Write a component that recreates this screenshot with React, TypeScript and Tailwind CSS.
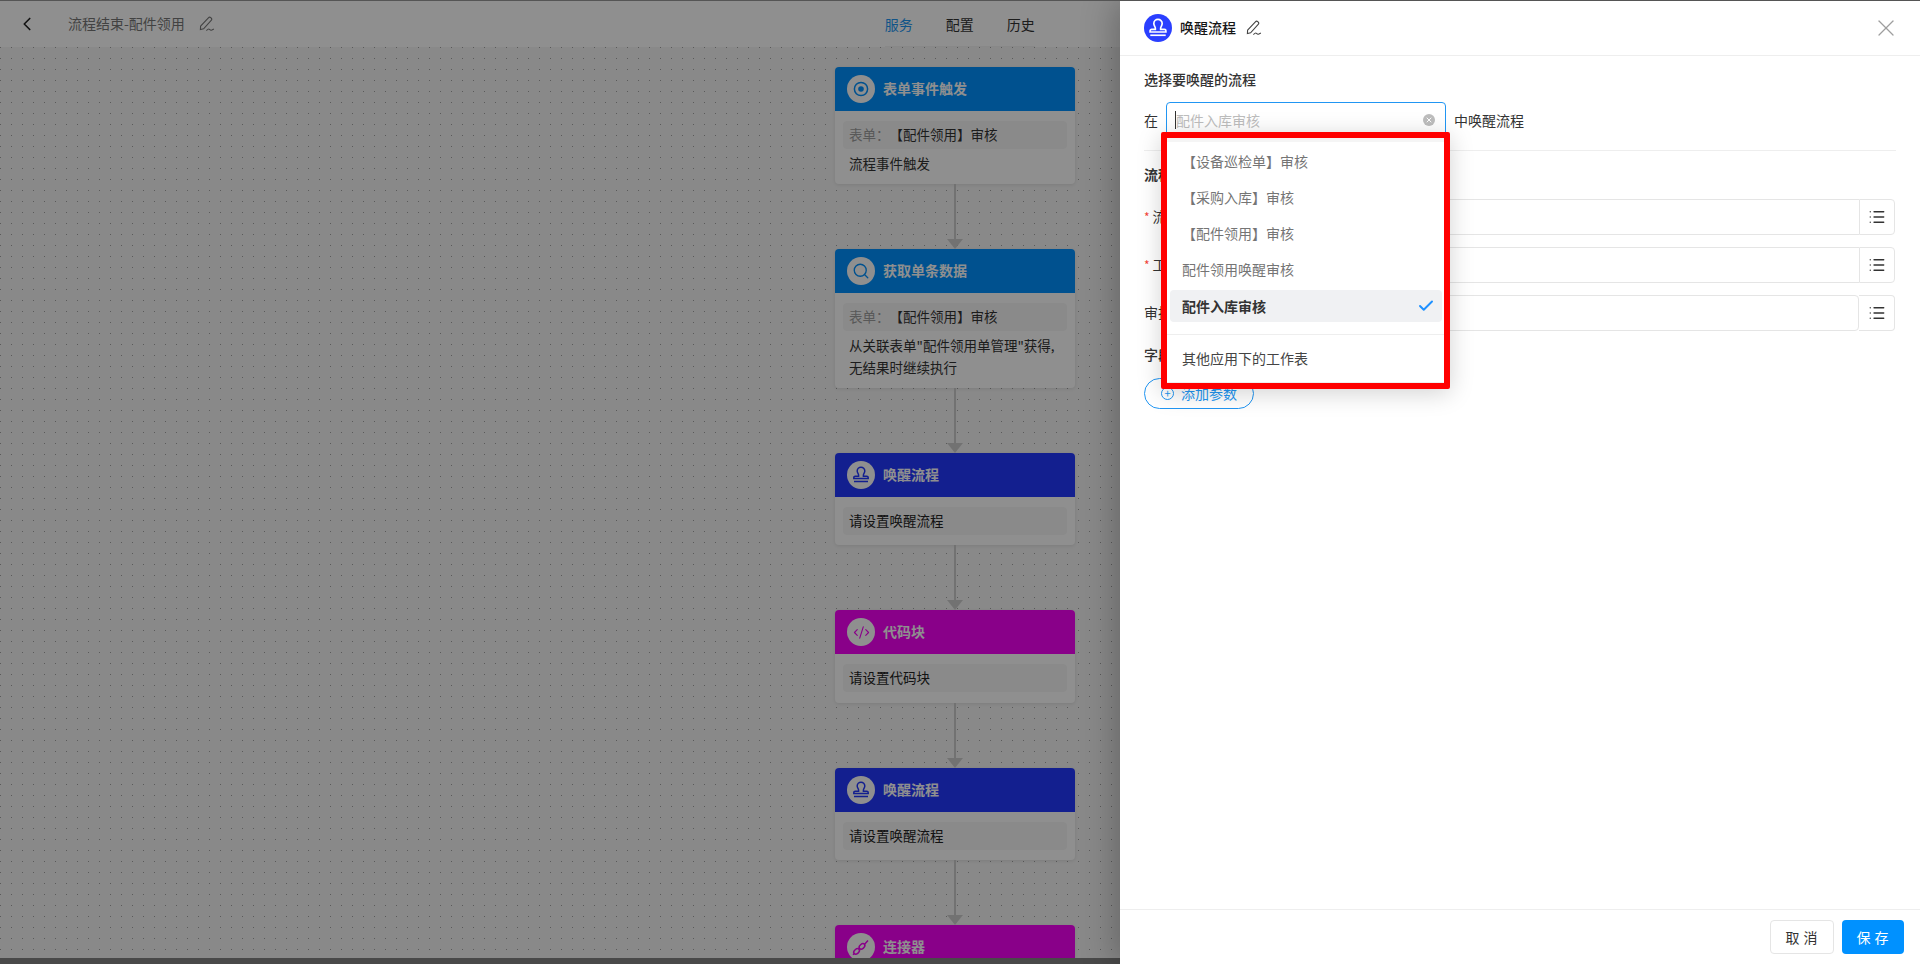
import { Check, ChevronLeft, CodeXml, List, Search, X } from "lucide-react";
import type { ReactNode } from "react";

type Node = {
  title: string;
  color: string;
  icon: ReactNode;
  form?: string;
  text?: string[];
  placeholder?: string;
  tall?: boolean;
};

function EditIcon({ className }: { className?: string }) {
  return (
    <svg viewBox="0 0 16 16" fill="none" stroke="currentColor" strokeWidth="1.1" className={className}>
      <path d="M1.6 10.2 9.4 1.8a1.7 1.7 0 0 1 2.4 -.1l.3.3a1.7 1.7 0 0 1 .1 2.4L4.6 12.8l-3.2 .8z" />
      <path d="M7.4 14.6c1.2-1.2 2.3-2 3-1.3.6.6 1 1.1 1.9.9.9-.2 1.6-.7 2.6-1.1" />
    </svg>
  );
}

function StampIcon({ className }: { className?: string }) {
  return (
    <svg viewBox="0 0 20 20" fill="none" stroke="currentColor" strokeWidth="1.5" className={className}>
      <path d="M7.6 10.2c0-1.4-1.4-2.2-1.4-4.2a3.8 3.8 0 0 1 7.6 0c0 2-1.4 2.8-1.4 4.2v1h3.4a1.4 1.4 0 0 1 1.4 1.4v1H2.8v-1a1.4 1.4 0 0 1 1.4-1.4h3.4z" />
      <path d="M3 16.6h14" />
    </svg>
  );
}

function TargetIcon({ className }: { className?: string }) {
  return (
    <svg viewBox="0 0 20 20" fill="none" stroke="currentColor" className={className}>
      <circle cx="10" cy="10" r="6.6" strokeWidth="1.5" />
      <circle cx="10" cy="10" r="2.8" fill="currentColor" stroke="none" />
    </svg>
  );
}

function LinkIcon({ className }: { className?: string }) {
  return (
    <svg viewBox="0 0 20 20" fill="none" stroke="currentColor" strokeWidth="1.5" className={className}>
      <ellipse cx="5.6" cy="14.4" rx="3.2" ry="2.2" transform="rotate(-40 5.6 14.4)" />
      <ellipse cx="11" cy="9.4" rx="3.2" ry="2.2" transform="rotate(-40 11 9.4)" />
      <path d="M7.8 12.4 8.8 11.4M13.6 7.2 17 3.6M2 17.8l1-1" />
    </svg>
  );
}

const nodes: Node[] = [
  {
    title: "表单事件触发",
    color: "bg-[#0091ff]",
    icon: <TargetIcon className="h-5 w-5 text-[#0091ff]" />,
    form: "【配件领用】审核",
    text: ["流程事件触发"],
  },
  {
    title: "获取单条数据",
    color: "bg-[#0091ff]",
    icon: <Search size={18} strokeWidth={1.8} className="text-[#0091ff]" />,
    form: "【配件领用】审核",
    text: ['从关联表单"配件领用单管理"获得,', "无结果时继续执行"],
  },
  {
    title: "唤醒流程",
    color: "bg-[#2338ff]",
    icon: <StampIcon className="h-5 w-5 text-[#2338ff]" />,
    placeholder: "请设置唤醒流程",
  },
  {
    title: "代码块",
    color: "bg-[#f400f4]",
    icon: <CodeXml size={17} strokeWidth={1.6} className="text-[#f400f4]" />,
    placeholder: "请设置代码块",
    tall: true,
  },
  {
    title: "唤醒流程",
    color: "bg-[#2338ff]",
    icon: <StampIcon className="h-5 w-5 text-[#2338ff]" />,
    placeholder: "请设置唤醒流程",
  },
  {
    title: "连接器",
    color: "bg-[#f400f4]",
    icon: <LinkIcon className="h-5 w-5 text-[#f400f4]" />,
    placeholder: "请设置连接器",
  },
];

function FlowCard({ node }: { node: Node }) {
  return (
    <div className="w-[240px] overflow-hidden rounded-[4px] bg-white shadow-[0_1px_4px_rgba(0,0,0,0.1)]">
      <div className={`flex h-[44px] items-center gap-2 pl-3 ${node.color}`}>
        <div className="flex h-7 w-7 items-center justify-center rounded-full bg-white">{node.icon}</div>
        <span className="pb-[2px] text-[14px] font-bold text-white">{node.title}</span>
      </div>
      <div className={`px-2 pt-[10px] ${node.tall ? "pb-[11px]" : "pb-[10px]"}`}>
        <div className="flex h-[28px] items-center rounded-[4px] bg-[#f7f7f7] px-[6px] pb-[2px] text-[13.5px]">
          {node.form ? (
            <>
              <span className="text-[#9e9e9e]">表单：</span>
              <span className="text-[#333]">{node.form}</span>
            </>
          ) : (
            <span className="text-[#222]">{node.placeholder}</span>
          )}
        </div>
        {node.text && (
          <div className="mt-[3px] whitespace-nowrap px-[6px] text-[13.5px] leading-[22px] text-[#333]">
            {node.text.map((line) => (
              <div key={line}>{line}</div>
            ))}
          </div>
        )}
      </div>
    </div>
  );
}

function Connector() {
  return (
    <div className="flex h-[65px] w-[240px] flex-col items-center">
      <div className="w-[2px] flex-1 bg-[#ccc]" />
      <div className="h-0 w-0 border-x-[8px] border-t-[10px] border-x-transparent border-t-[#ccc]" />
    </div>
  );
}

function ParamRow({ label, required, split }: { label: string; required?: boolean; split?: boolean }) {
  return (
    <div className="mr-px flex h-9 items-center">
      <div className="w-[96px] pb-[2px] text-[14px] text-[#333]">
        {required && <span className="mr-[3px] text-[12px] text-[#f44336]">*</span>}
        {label}
      </div>
      <div className={`h-9 flex-1 rounded-l-[4px] border border-[#e5e5e5] ${split ? "rounded-r-[4px]" : "border-r-0"}`} />
      <div className={`flex h-9 w-[36px] items-center justify-center rounded-r-[4px] border border-[#e5e5e5] ${split ? "border-l-0" : ""}`}>
        <List size={18} strokeWidth={1.7} className="text-[#333]" />
      </div>
    </div>
  );
}

function WorkflowMenu() {
  const items = ["【设备巡检单】审核", "【采购入库】审核", "【配件领用】审核", "配件领用唤醒审核"];
  return (
    <div className="absolute left-[41px] top-[131px] w-[289px] rounded-[2px] border-[6px] border-[#ff0000] bg-white text-[14px] shadow-[0_4px_24px_rgba(0,0,0,0.18)]">
      <div className="h-[4px] bg-[#f5f5f5]" />
      <div className="pt-[2px]">
        {items.map((item) => (
          <div key={item} className="flex h-9 items-center pb-[2px] pl-[15px] text-[#757575]">
            {item}
          </div>
        ))}
        <div className="flex h-9 items-center py-[2px] pl-[3px] pr-[2px]">
          <div className="flex h-full flex-1 items-center justify-between rounded-[4px] bg-[#f0f1f3] pl-[12px] pr-[7px] font-bold text-[#333]">
            <span>配件入库审核</span>
            <Check size={18} strokeWidth={2.6} className="text-[#1e90ff]" />
          </div>
        </div>
      </div>
      <div className="mb-[6px] mt-[10px] border-t border-[#eee]" />
      <div className="flex h-9 items-center pb-[2px] pl-[15px] text-[#444]">其他应用下的工作表</div>
      <div className="h-[6px] border-b border-[#eee]" />
    </div>
  );
}

function Drawer() {
  return (
    <div className="absolute bottom-0 right-0 top-0 flex w-[800px] flex-col bg-white shadow-[-6px_0_30px_rgba(0,0,0,0.25)]">
      <div className="flex h-[55px] items-center border-b border-[#eee] pl-[24px] pr-[20px]">
        <div className="flex h-7 w-7 items-center justify-center rounded-full bg-[#2a3fff]">
          <StampIcon className="h-[22px] w-[22px] text-white" />
        </div>
        <span className="ml-2 pb-[2px] text-[14px] font-medium text-[#151515]">唤醒流程</span>
        <EditIcon className="ml-[10px] h-[16px] w-[16px] text-[#444]" />
        <X size={28} strokeWidth={1.1} className="ml-auto text-[#9e9e9e]" />
      </div>

      <div className="flex-1 px-[24px]">
        <div className="mt-[13px] text-[14px] font-medium leading-[20px] text-[#333]">选择要唤醒的流程</div>
        <div className="mt-[13px] flex h-9 items-center text-[14px] text-[#333]">
          <span className="w-[22px]">在</span>
          <div className="flex h-9 w-[280px] items-center rounded-[4px] border border-[#2196f3] pl-2 pr-[10px]">
            <span className="h-[18px] w-px bg-[#333]" />
            <span className="text-[#bdbdbd]">配件入库审核</span>
            <span className="ml-auto flex h-3 w-3 items-center justify-center rounded-full bg-[#bdbdbd]">
              <X size={8} strokeWidth={3} className="text-white" />
            </span>
          </div>
          <span className="ml-2">中唤醒流程</span>
        </div>
        <div className="mt-3 border-t border-[#eee]" />
        <div className="mt-[13px] text-[14px] font-bold leading-[20px] text-[#333]">流程参数</div>
        <div className="mt-[15px] flex flex-col gap-3">
          <ParamRow label="流程名称" required />
          <ParamRow label="工作表" required />
          <ParamRow label="审批人" split />
        </div>
        <div className="mt-[13px] text-[14px] font-medium leading-[20px] text-[#333]">字段参数</div>
        <div className="mt-[14px] flex h-[31px] w-[110px] items-center rounded-full border border-[#2196f3] pl-[16px] text-[14px] text-[#2196f3]">
          <span className="flex h-[13px] w-[13px] items-center justify-center rounded-full border border-[#2196f3] text-[11px] leading-none">+</span>
          <span className="ml-[7px]">添加参数</span>
        </div>
      </div>

      <div className="flex h-[55px] items-start justify-end gap-2 border-t border-[#eee] pr-[16px] pt-[10px]">
        <button className="h-[34px] w-[64px] rounded-[4px] border border-[#e5e5e5] bg-white pl-[3px] text-[14px] tracking-[4px] text-[#333]">取消</button>
        <button className="h-[34px] w-[62px] rounded-[4px] bg-[#0091ff] pl-[3px] text-[14px] tracking-[4px] text-white">保存</button>
      </div>

      <WorkflowMenu />
    </div>
  );
}

export default function App() {
  return (
    <div className="relative flex h-[964px] w-full flex-col overflow-hidden border-t border-[#555] bg-white font-['Noto_Sans_CJK_SC',sans-serif]">
      <header className="flex h-[46px] items-center text-[14px]">
        <ChevronLeft size={22} strokeWidth={1.8} className="ml-[16px] text-[#222]" />
        <span className="ml-[30px] pb-[2px] text-[#777]">流程结束-配件领用</span>
        <EditIcon className="ml-[14px] h-[16px] w-[16px] text-[#777]" />
        <nav className="ml-[670px] flex gap-[33px] self-stretch border-b border-[#f2f2f2] pb-[3px] pt-[13px] text-[#333]">
          <span className="text-[#2196f3]">服务</span>
          <span>配置</span>
          <span>历史</span>
        </nav>
      </header>

      <main className="min-h-0 flex-1 overflow-hidden bg-[#f5f5f5] bg-[radial-gradient(circle_at_0.5px_0.5px,#a0a0a0_0.5px,transparent_0.7px)] bg-[size:11px_11px] pl-[835px] pt-[20px]">
        {nodes.map((node, i) => (
          <div key={i}>
            {i > 0 && <Connector />}
            <FlowCard node={node} />
          </div>
        ))}
      </main>
      <div className="h-[6px] bg-[#828282]" />

      <div className="absolute inset-0 bg-black/[.44]" />
      <Drawer />
    </div>
  );
}
